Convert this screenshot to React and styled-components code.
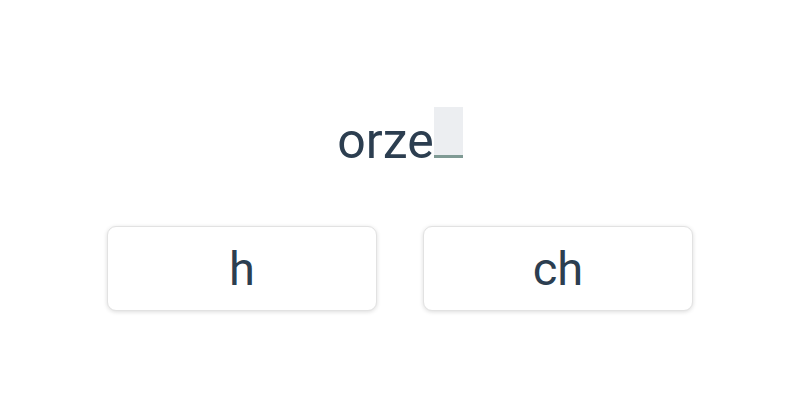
import React from 'react';
import styled, { createGlobalStyle } from 'styled-components';

const GlobalStyle = createGlobalStyle`
  html, body {
    margin: 0;
    padding: 0;
    background: #fff;
  }
  body {
    font-family: Roboto, "Liberation Sans", sans-serif;
    color: #2c3e50;
  }
`;

const Page = styled.div`
  width: 800px;
  height: 400px;
  display: flex;
  flex-direction: column;
  align-items: center;
  padding-top: 107px;
  box-sizing: border-box;
`;

const Word = styled.div`
  display: flex;
  align-items: baseline;
  height: 51px;
  font-size: 50px;
  line-height: 1;
`;

const Gap = styled.span`
  display: inline-block;
  width: 29px;
  height: 51px;
  background: #eceef1;
  border-bottom: 3px solid #7f9a94;
  box-sizing: border-box;
`;

const Options = styled.div`
  display: flex;
  gap: 46px;
  margin-top: 68px;
`;

const Option = styled.button`
  width: 270px;
  height: 85px;
  background: #fff;
  border: 1px solid #e2e2e2;
  border-radius: 9px;
  box-shadow: 0 1px 4px rgba(0, 0, 0, 0.14);
  font-family: Roboto, "Liberation Sans", sans-serif;
  font-size: 47px;
  color: #2c3e50;
  cursor: pointer;
`;

export default function App() {
  return (
    <>
      <GlobalStyle />
      <Page>
        <Word>
          <span>orze</span>
          <Gap />
        </Word>
        <Options>
          <Option>h</Option>
          <Option>ch</Option>
        </Options>
      </Page>
    </>
  );
}
